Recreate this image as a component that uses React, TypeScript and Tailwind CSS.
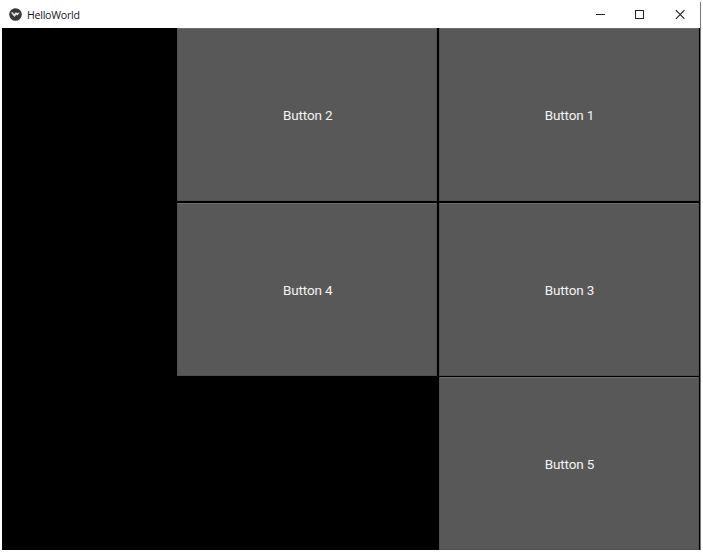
const buttons = [
  { label: "Button 2", place: "col-start-2 row-start-1" },
  { label: "Button 1", place: "col-start-3 row-start-1" },
  { label: "Button 4", place: "col-start-2 row-start-2" },
  { label: "Button 3", place: "col-start-3 row-start-2" },
  { label: "Button 5", place: "col-start-3 row-start-3" },
];

function TitleBar() {
  return (
    <header className="flex h-[26px] shrink-0 items-center bg-white pl-[7px]">
      <svg width="13" height="13" viewBox="0 0 13 13" className="-mt-0.5">
        <circle cx="6.5" cy="6.5" r="6.3" fill="#383838" />
        <path d="M1.9 4.4 3.8 4.2 5.2 6.2 6.7 4.2 8.2 5 10.9 4.4 9.6 6 8.7 7.6 7.2 6.7 5.4 8.9Z" fill="#e4e4e4" />
      </svg>
      <h1 className="ml-[5px] font-['Open_Sans',sans-serif] text-[10.6px] leading-4 tracking-[-0.25px] text-[#17121c]">
        HelloWorld
      </h1>
      <div className="ml-auto flex items-center text-[#222]">
        <button aria-label="Minimize" className="grid h-[26px] w-10 place-items-center">
          <svg width="11" height="11" viewBox="0 0 11 11" className="-mt-0.5"><path d="M1 5.5h9" stroke="currentColor" /></svg>
        </button>
        <button aria-label="Maximize" className="grid h-[26px] w-10 place-items-center">
          <svg width="11" height="11" viewBox="0 0 11 11" className="-mt-0.5"><rect x="0.5" y="1.5" width="8" height="8" fill="none" stroke="currentColor" /></svg>
        </button>
        <button aria-label="Close" className="grid h-[26px] w-10 place-items-center">
          <svg width="11" height="11" viewBox="0 0 11 11" className="-mt-0.5"><path d="m0.9 1.2 8.6 8.6m0-8.6L0.9 9.8" stroke="currentColor" strokeWidth="1.1" /></svg>
        </button>
      </div>
    </header>
  );
}

export default function App() {
  return (
    <div className="h-[552px] w-[703px] overflow-hidden bg-white pt-0.5 pl-0.5">
      <div className="flex h-[548px] w-[699px] flex-col border-r border-[#777]">
        <TitleBar />
        <main className="grid min-h-0 flex-1 grid-cols-[173.5px_260px_260px] grid-rows-[173px_173px_173px] gap-x-[1.75px] gap-y-[1.5px] overflow-hidden bg-black">
          {buttons.map(({ label, place }) => (
            <button
              key={label}
              className={`${place} rounded-[1px] border border-[#505050] border-t-[#6d6d6d] bg-[#585858] pt-0.5 pl-px text-center font-[Roboto,sans-serif] text-[13.5px] tracking-[-0.12px] text-[#f3f3f3]`}
            >
              {label}
            </button>
          ))}
        </main>
      </div>
    </div>
  );
}
